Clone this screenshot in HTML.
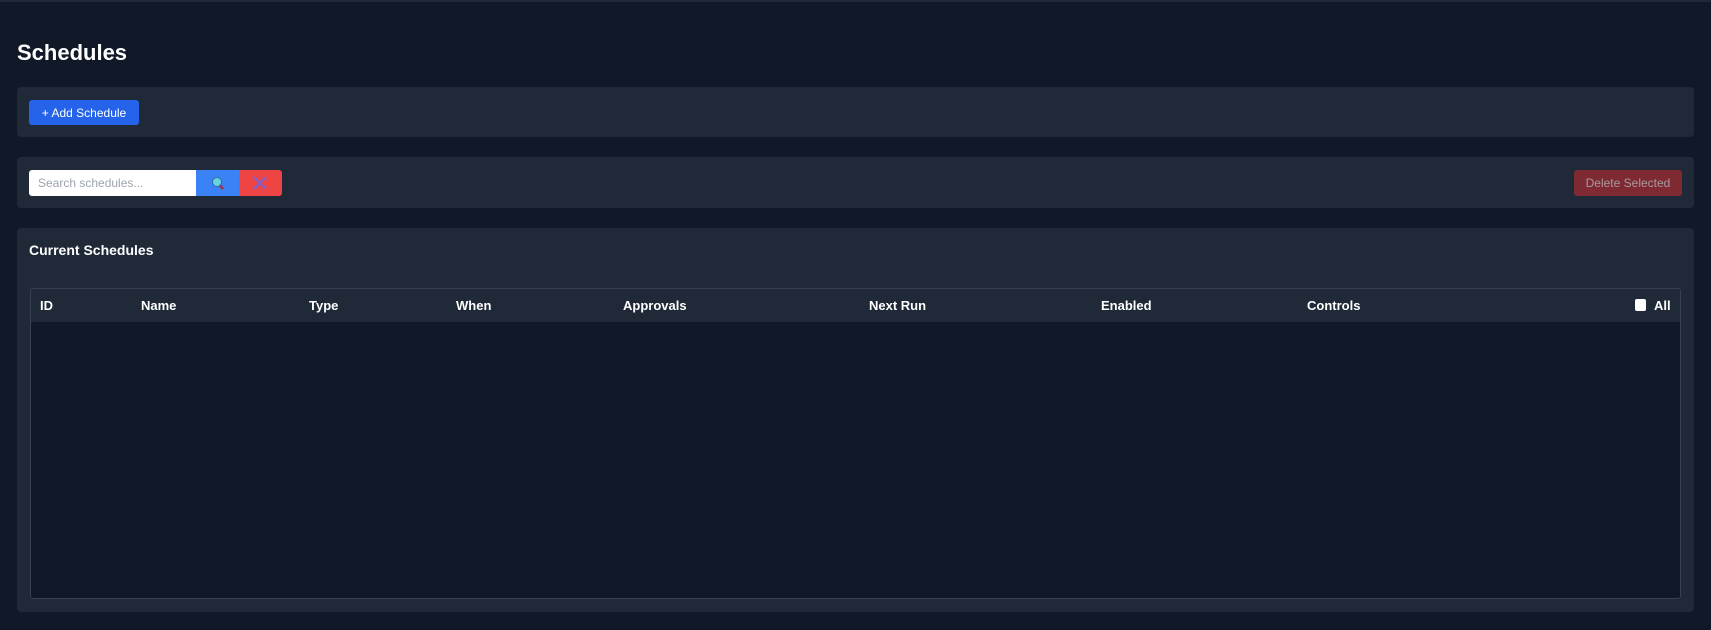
<!DOCTYPE html>
<html><head><meta charset="utf-8"><style>
*{box-sizing:border-box;margin:0;padding:0}
body{width:1711px;height:630px;background:#111827;font-family:"Liberation Sans",sans-serif;color:#fff;position:relative;overflow:hidden}
.p{position:absolute;left:17px;width:1677px;background:#1f2937;border-radius:4px}
.btn{position:absolute;border-radius:3px;font-size:12px;display:flex;align-items:center;justify-content:center}
</style></head><body>
<div style="position:absolute;left:0;top:0;width:1711px;height:2px;background:#1f2937"></div>
<div style="position:absolute;left:17px;top:40px;font-size:22px;font-weight:bold">Schedules</div>
<div class="p" style="top:87px;height:50px"></div>
<div class="btn" style="left:29px;top:100px;width:110px;height:25px;background:#2563eb">+ Add Schedule</div>
<div class="p" style="top:157px;height:51px"></div>
<div style="position:absolute;left:29px;top:170px;width:167px;height:26px;background:#fff;border-radius:3px 0 0 3px;color:#9ca3af;font-size:12px;padding:6px 9px">Search schedules...</div>
<div style="position:absolute;left:196px;top:170px;width:43px;height:26px;background:#3b82f6"><svg width="43" height="26"><circle cx="21" cy="12" r="4.5" fill="#67d3e0" stroke="#2f6fa0"/><line x1="24" y1="15.5" x2="27" y2="19" stroke="#a0304a" stroke-width="2.5"/></svg></div>
<div style="position:absolute;left:239px;top:170px;width:43px;height:26px;background:#ef4444;border-radius:0 3px 3px 0"><svg width="43" height="26"><path d="M15 7L27 19M27 7L15 19" stroke="#7c5fd0" stroke-width="2.2"/></svg></div>
<div class="btn" style="left:1574px;top:170px;width:108px;height:26px;background:#7f2a33;color:#a89a9f">Delete Selected</div>
<div class="p" style="top:228px;height:384px"></div>
<div style="position:absolute;left:29px;top:242px;font-size:14px;font-weight:bold">Current Schedules</div>
<div style="position:absolute;left:30px;top:288px;width:1651px;height:311px;border:1px solid #374151;border-radius:3px;background:#111827;overflow:hidden"><div style="height:33px;background:#1f2937"></div></div>
<div style="font-size:13px;font-weight:bold">
<span style="position:absolute;left:40px;top:298px">ID</span>
<span style="position:absolute;left:141px;top:298px">Name</span>
<span style="position:absolute;left:309px;top:298px">Type</span>
<span style="position:absolute;left:456px;top:298px">When</span>
<span style="position:absolute;left:623px;top:298px">Approvals</span>
<span style="position:absolute;left:869px;top:298px">Next Run</span>
<span style="position:absolute;left:1101px;top:298px">Enabled</span>
<span style="position:absolute;left:1307px;top:298px">Controls</span>
<span style="position:absolute;left:1635px;top:299px;width:11px;height:12px;background:#fff;border-radius:2px"></span>
<span style="position:absolute;left:1654px;top:298px">All</span>
</div>
</body></html>
